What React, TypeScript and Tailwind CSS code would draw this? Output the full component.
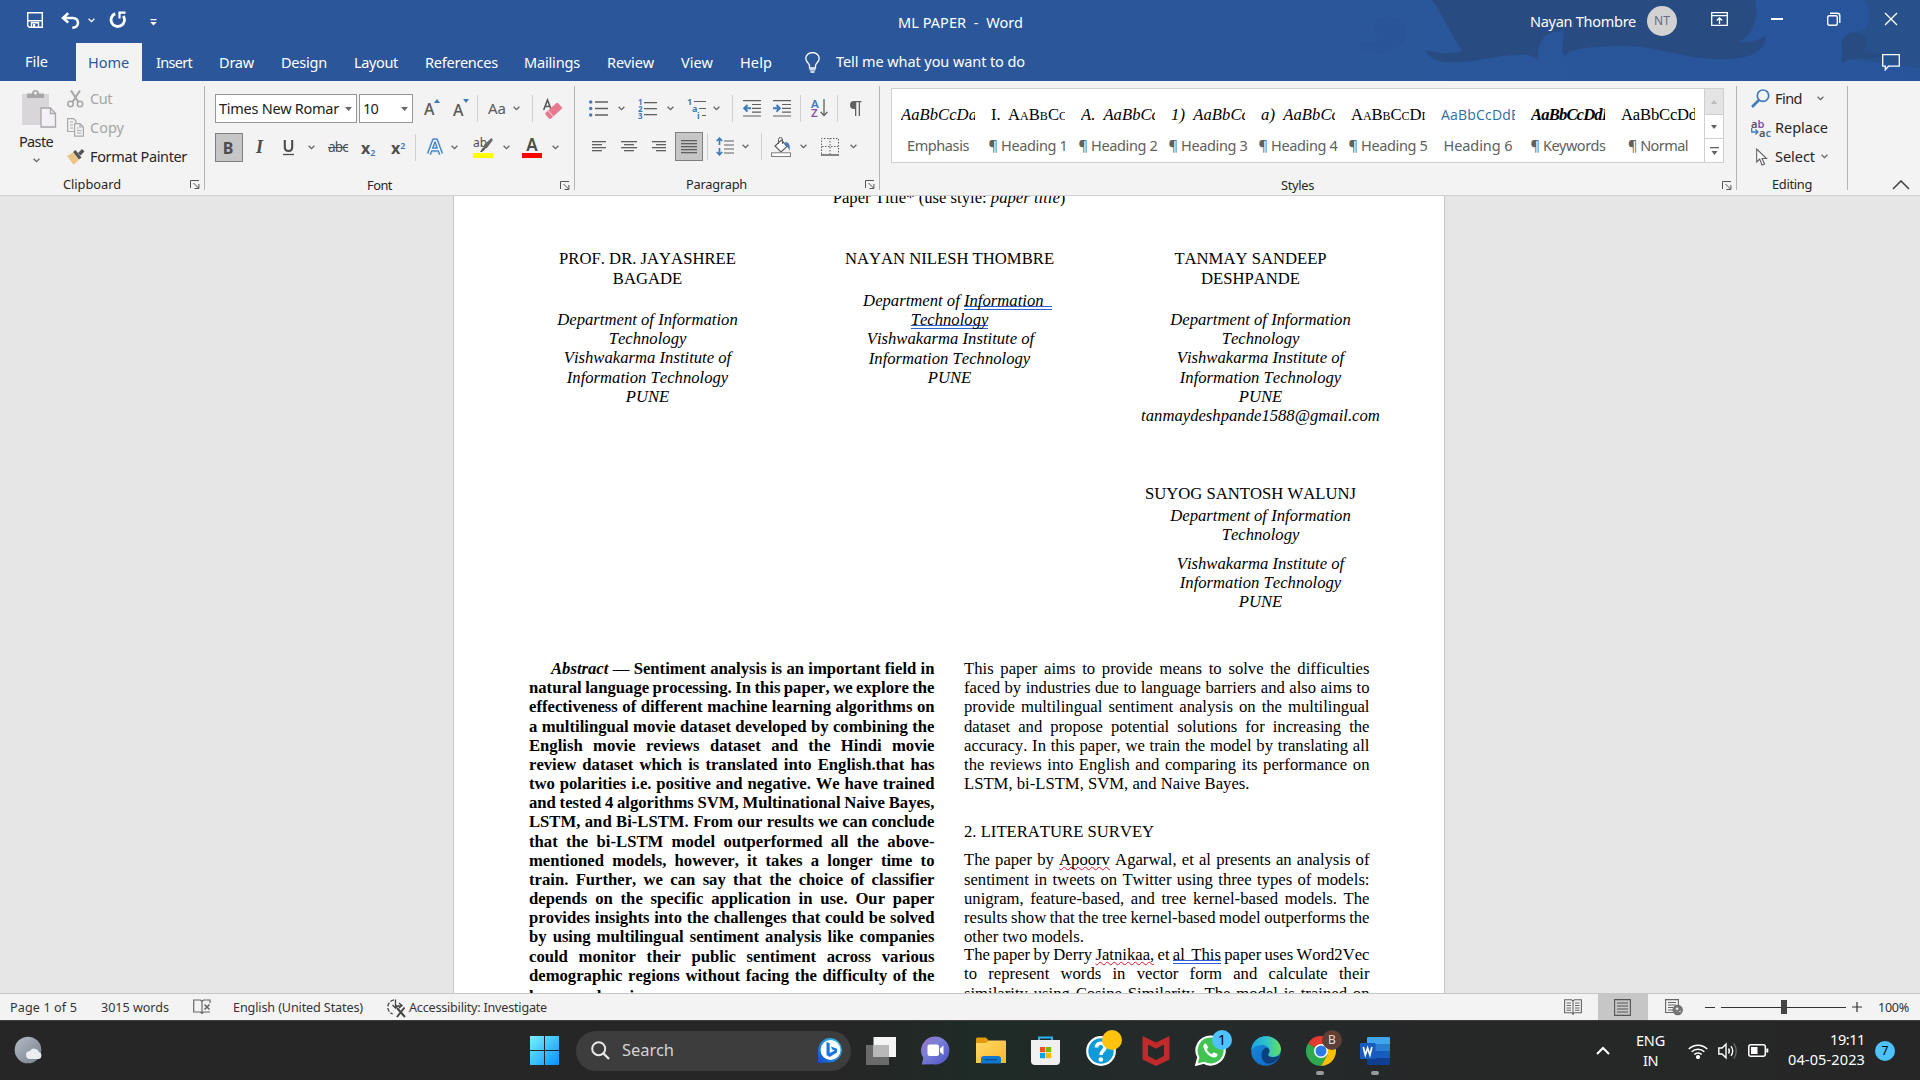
import { useLayoutEffect, useRef, useState } from "react";
import type { ReactNode } from "react";

/* Text tracked so that it spans exactly `w` pixels. */
function T({ w, children, className = "" }: { w: number; children: string; className?: string }) {
  const ref = useRef<HTMLSpanElement>(null);
  const [ls, setLs] = useState(0);
  useLayoutEffect(() => {
    const el = ref.current;
    if (!el) return;
    setLs((w - el.getBoundingClientRect().width) / children.length);
  }, [w, children]);
  return (
    <span ref={ref} className={`inline-block shrink-0 whitespace-pre ${className}`} style={{ letterSpacing: ls }}>
      {children}
    </span>
  );
}

function Caret({ className = "", c = "#666" }: { className?: string; c?: string }) {
  return (
    <svg className={`shrink-0 ${className}`} width="7" height="5" viewBox="0 0 7 5" fill="none" stroke={c} strokeWidth="1.3">
      <path d="M.6.8 3.5 3.7 6.4.8" />
    </svg>
  );
}

function Down() {
  return (
    <svg className="shrink-0" width="7" height="4" viewBox="0 0 7 4" fill="#666">
      <path d="M0 0h7L3.5 4z" />
    </svg>
  );
}

function Launcher({ className = "" }: { className?: string }) {
  return (
    <svg className={`shrink-0 ${className}`} width="10" height="9" viewBox="0 0 10 9" fill="none" stroke="#555" strokeWidth="1">
      <path d="M.5 8V.5H9M3.5 3l5 5M8.9 4v4.5H4.5" />
    </svg>
  );
}

function Slot({ children, className = "" }: { children?: ReactNode; className?: string }) {
  return <div className={`flex h-full shrink-0 items-center ${className}`}>{children}</div>;
}

const Sep = () => <div className="h-[27px] w-px shrink-0 bg-[#d0d0d0]" />;
const GroupSep = () => <div className="mt-[5px] h-[104px] w-px shrink-0 bg-[#b4b4b4]" />;

/* ---------- Title bar ---------- */

function TitleBar() {
  return (
    <div className="relative h-[81px] overflow-hidden bg-[#2b579a] text-white">
      <svg className="absolute top-0 right-0" width="640" height="81" viewBox="1280 0 640 81">
        <defs>
          <linearGradient id="sky" x1="0" x2="1"><stop offset="0" stopColor="#2b579a" /><stop offset="1" stopColor="#27549b" /></linearGradient>
        </defs>
        <path d="M1280 0h640v81h-640z" fill="url(#sky)" />
        <path d="M1380 18c14-3 24 2 24 12 6 5 2 13-12 19-14 5-30 2-34-4 8 0 16-2 22-6-8-6-8-16 0-21z" fill="#29508c" opacity=".35" />
        <path d="M1432 0h133v31c-22 0-28 12-27 29-8-6-14-6-20-5-25 0-45 9-73 7-11-2-18-6-19-12 8 3 27 5 36 1-9-13-18-34-30-51z" fill="#284c82" />
        <path d="M1564 0h191c4 18-2 35-16 42 12 1 21-2 26-7 3 17-18 26-51 24-38-2-58-14-96-13-26 1-46 1-54 11-4-12 2-16 0-57z" fill="#284c82" />
        <path d="M1864 0h56v68c-25-2-47-8-64-8-7-1-11 0-14 3-1-9 3-11 0-18 0-10 9-15 18-13 14-8 12-20 4-32z" fill="#28508b" />
        <path d="M1842 50c-2-11 5-18 14-17 11 1 14 11 7 17 4 2 14 2 20 6-20 5-34-1-41 7z" fill="#284c82" />
      </svg>
      <div className="relative flex h-[43px] items-start">
        <svg className="mt-[12px] ml-[27px]" width="16" height="16" viewBox="0 0 16 16" fill="none" stroke="#fff" strokeWidth="1.4">
          <path d="M.7.7h14.6v14.6H2.2L.7 13.8zM1 8.700h14" />
          <path d="M4.5 15v-4.3h7V15" /><path d="M6 12h2.200v3H6z" fill="#fff" stroke="none" />
        </svg>
        <svg className="mt-[12px] ml-[18px]" width="19" height="17" viewBox="0 0 19 17" fill="none" stroke="#fff" strokeWidth="2.5">
          <path d="M7.2 1.2 2 6l5.2 4.6M2 6h9.5q5.500.4 5.500 5-.2 4.500-5.700 4.700" />
        </svg>
        <Caret c="#fff" className="mt-[18px] ml-[8px]" />
        <svg className="mt-[11px] ml-[14px]" width="18" height="18" viewBox="0 0 18 18" fill="none" stroke="#fff" strokeWidth="2.800">
          <path d="M6.2 2.600A6.700 6.700 0 1 0 14.300 5" /><path d="M16.500 1.600h-6v6" strokeWidth="2.200" />
        </svg>
        <svg className="mt-[19px] ml-[23px]" width="7" height="7" viewBox="0 0 7 7" fill="#fff"><path d="M.5 0h6v1.200h-6zM.2 3h6.600L3.500 6.500z" /></svg>
        <T w={125} className="mt-[12px] ml-[741px] text-[14.5px] leading-[21px]">ML PAPER  -  Word</T>
        <T w={106} className="mt-[11px] ml-[507px] text-[14.5px] leading-[21px]">Nayan Thombre</T>
        <div className="mt-[6px] ml-[11px] flex h-[30px] w-[30px] items-center justify-center rounded-full bg-[#d2d2d2] text-[12px] text-[#6b6b78]">NT</div>
        <svg className="mt-[12px] ml-[34px]" width="17" height="15" viewBox="0 0 17 15" fill="none" stroke="#fff" strokeWidth="1.3"><path d="M.7.7h15.600v12.600H.7zM1 3.600h15M8.500 12V6M5.800 8.500l2.700-2.700 2.700 2.700" /></svg>
        <div className="mt-[18px] ml-[43px] h-[1.5px] w-[12px] bg-white" />
        <svg className="mt-[12px] ml-[44px]" width="14" height="15" viewBox="0 0 14 15" fill="none" stroke="#fff" strokeWidth="1.4"><rect x=".7" y="3.7" width="9.6" height="9.6" rx="1.5" /><path d="M3 1.200h7.200q2.600 0 2.600 2.600V11" /></svg>
        <svg className="mt-[12px] ml-[43px]" width="14" height="14" viewBox="0 0 14 14" stroke="#fff" strokeWidth="1.4"><path d="m1 1 12 12M13 1 1 13" /></svg>
      </div>
      <div className="relative flex h-[38px] items-center text-[14.5px]">
        <div className="flex w-[76px] pl-[25px]"><T w={23}>File</T></div>
        <div className="flex h-full w-[66px] items-center bg-[#f3f3f3] pt-px pl-[12px] text-[#2b579a]"><T w={41}>Home</T></div>
        <div className="flex w-[663px] pt-px pl-[14px]">
          <div className="w-[63px]"><T w={36}>Insert</T></div>
          <div className="w-[62px]"><T w={35}>Draw</T></div>
          <div className="w-[73px]"><T w={46}>Design</T></div>
          <div className="w-[71px]"><T w={44}>Layout</T></div>
          <div className="w-[99px]"><T w={73}>References</T></div>
          <div className="w-[83px]"><T w={56}>Mailings</T></div>
          <div className="w-[74px]"><T w={47}>Review</T></div>
          <div className="w-[59px]"><T w={32}>View</T></div>
          <T w={32}>Help</T>
        </div>
        <svg width="15" height="21" viewBox="0 0 15 21" fill="none" stroke="#fff" strokeWidth="1.3"><path d="M4.5 16v-2.5C4 11 .8 10 .8 6.6a6.7 6 0 0 1 13.4 0c0 3.4-3.200 4.400-3.700 6.900V16zM4.500 17.800h6M5.500 20h4" /></svg>
        <T w={189} className="ml-[16px]">Tell me what you want to do</T>
        <svg className="ml-[857px]" width="18" height="17" viewBox="0 0 18 17" fill="none" stroke="#fff" strokeWidth="1.3"><path d="M.7.7h16.600v11.500H6.500L3.300 15.800v-3.600H.7z" /></svg>
      </div>
    </div>
  );
}

/* ---------- Ribbon ---------- */

function Clipboard() {
  return (
    <div className="flex w-[204px] shrink-0 flex-col">
      <div className="flex h-[94px]">
        <div className="w-[67px]">
          <svg className="mt-[8px] ml-[21px]" width="36" height="40" viewBox="0 0 36 40"><path d="M1 5h27v31H1z" fill="#d9d6d9" /><path d="M6 9V4.500h5A3.500 3.500 0 0 1 18 4.500h5V9z" fill="#a9a6a9" /><circle cx="14.500" cy="4" r="1.500" fill="#f3f3f3" /><path d="M20 19h9.500l5 5.500V38H20z" fill="#f5f0f7" stroke="#a9a6a9" strokeWidth="1.300" /><path d="M29.500 19v5.500h5" fill="none" stroke="#a9a6a9" strokeWidth="1.300" /></svg>
          <T w={34} className="-mt-[3px] ml-[19px] block text-[14.5px] leading-[24px] text-[#262626]">Paste</T>
          <Caret className="mt-[5px] ml-[33px]" />
        </div>
        <div className="flex flex-col pt-[3px] text-[14.5px] leading-[29px]">
          <div className="flex h-[29px] items-center text-[#a6a6a6]">
            <svg className="mr-[6px]" width="17" height="18" viewBox="0 0 17 18" fill="none" stroke="#a6a6a6" strokeWidth="1.500"><path d="m4 .5 7.600 11.700M13 .5 5.400 12.200" strokeWidth="2" /><circle cx="3.500" cy="14" r="2.700" /><circle cx="13" cy="14" r="2.700" /></svg>
            <T w={22}>Cut</T>
          </div>
          <div className="flex h-[29px] items-center text-[#a6a6a6]">
            <svg className="mr-[6px]" width="17" height="19" viewBox="0 0 17 19" fill="none" stroke="#a9a9a9" strokeWidth="1.200"><path d="M7 13.500H.6V.6h6L9 3v2M3 4h3M3 7h3M3 10h3" /><path d="M7.600 5.600h5.500l3.300 3.300v9.200H7.600zM13 5.600V9h3.400M10 10h2M10 12.500h4.500M10 15h4.500" /></svg>
            <T w={34}>Copy</T>
          </div>
          <div className="flex h-[29px] items-center text-[#262626]">
            <svg className="mr-[5px]" width="18" height="16" viewBox="0 0 18 16"><path d="M0 7 6 3.500l6 7.500-5.500 4.700z" fill="#ecc485" /><path d="m6 3 2.500-2 6 7.500-2.500 2z" fill="#555" /><path d="m11 4 4-4 2.500 2.500-4 4z" fill="#555" /></svg>
            <T w={97}>Format Painter</T>
          </div>
        </div>
      </div>
      <div className="mt-px flex items-center text-[12.8px] leading-[21px] text-[#262626]">
        <T w={58} className="ml-[63px]">Clipboard</T><Launcher className="ml-[69px]" />
      </div>
    </div>
  );
}

function FontGroup() {
  return (
    <div className="flex w-[369px] shrink-0 flex-col">
      <div className="mt-[13px] flex h-[29px] items-center pl-[10px]">
        <div className="flex h-[29px] w-[142px] items-center border border-[#969696] bg-white pl-[3px]"><T w={120} className="text-[14.5px] text-[#222]">Times New Romar</T><span className="ml-[6px]"><Down /></span></div>
        <div className="ml-[2px] flex h-[29px] w-[54px] items-center border border-[#969696] bg-white pl-[3px]"><T w={15} className="text-[14.5px] text-[#222]">10</T><span className="ml-[23px]"><Down /></span></div>
        <Slot className="w-[29px] pl-[11px] text-[16px] text-[#595959]"><T w={11} className="font-medium">A</T><svg className="-mt-[15px] -ml-px" width="6" height="4" viewBox="0 0 6 4" fill="#3e7bba"><path d="M0 4 3 0l3 4z" /></svg></Slot>
        <Slot className="w-[35px] pl-[11px] text-[16px] text-[#595959]"><T w={11} className="pt-[2px] font-medium">A</T><svg className="-mt-[15px] -ml-px" width="6" height="4" viewBox="0 0 6 4" fill="#3e7bba"><path d="m0 0 3 4 3-4z" /></svg></Slot>
        <Sep />
        <Slot className="w-[54px] pl-[10px] text-[15px] text-[#595959]"><T w={18}>Aa</T><Caret className="ml-[7px]" /></Slot>
        <Sep />
        <svg className="ml-[10px]" width="20" height="21" viewBox="0 0 20 21"><path d="M.7 12 4.500 2l3.800 10M2 8.500h5" fill="none" stroke="#595959" strokeWidth="1.600" /><g transform="rotate(-42 11 12.500)"><rect x="2" y="8.500" width="17" height="8" rx="1.500" fill="#e8798e" /><path d="M6.500 8.500v8" stroke="#f6d5db" /></g></svg>
      </div>
      <div className="mt-[10px] flex h-[29px] items-center pl-[10px] text-[#4d4d4d]">
        <div className="flex h-[29px] w-[28px] items-center justify-center border border-[#7f7f7f] bg-[#c6c6c6] pr-[2px] text-[16px] font-bold">B</div>
        <Slot className="w-[40px] justify-center pr-[7px]"><span className="font-['Liberation_Serif'] text-[18px] font-bold italic">I</span></Slot>
        <svg width="11" height="18" viewBox="0 0 11 18" fill="none" stroke="#4d4d4d"><path d="M1.800 1v7q0 4 3.700 4t3.700-4V1" strokeWidth="2.100" /><path d="M0 15.500h11" strokeWidth="1.300" /></svg>
        <Caret className="ml-[14px]" />
        <T w={20} className="ml-[13px] text-[13.5px] line-through">abc</T>
        <span className="ml-[13px] w-[30px] text-[16px] font-bold">x<sub className="text-[9px] font-semibold text-[#3e7bba]">2</sub></span>
        <span className="w-[24px] text-[16px] font-bold">x<sup className="text-[9px] font-semibold text-[#3e7bba]">2</sup></span>
        <Sep />
        <svg className="ml-[10px]" width="18" height="19" viewBox="0 0 18 19" strokeLinejoin="round"><path d="M3 16 8 2.500h2L15 16M5 11.500h8" fill="none" stroke="#b6d2ef" strokeWidth="5.400" /><path d="M3 16 8 2.500h2L15 16M5 11.500h8" fill="none" stroke="#3a7cc2" strokeWidth="3.800" /><path d="M3 16 8 2.500h2L15 16M5 11.500h8" fill="none" stroke="#fff" strokeWidth="1.500" /></svg>
        <Caret className="ml-[7px]" />
        <div className="ml-[15px] flex w-[20px] flex-col">
          <div className="flex h-[15px]"><span className="text-[12px] leading-[9px]">ab</span><svg className="-ml-[7px]" width="13" height="15" viewBox="0 0 13 15"><path d="M11.500 0 13 2 7 10 3.500 11.500 4 7z" fill="#666" /><path d="m3 9.500 2 2L2 14H0z" fill="#555" /></svg></div>
          <div className="h-[5px] w-[20px] bg-[#ffff00]" />
        </div>
        <Caret className="ml-[10px]" />
        <div className="ml-[12px] flex w-[20px] flex-col items-center"><span className="h-[15px] text-[17px] leading-[14px] font-semibold">A</span><div className="h-[5px] w-[20px] bg-[#ff0000]" /></div>
        <Caret className="ml-[10px]" />
      </div>
      <div className="mt-[13px] flex items-center text-[12.8px] leading-[21px] text-[#262626]">
        <T w={25} className="ml-[162px]">Font</T><Launcher className="ml-[168px]" />
      </div>
    </div>
  );
}

function Lines({ rows, w = 18, h = 17 }: { rows: [number, number, number][]; w?: number; h?: number }) {
  return (
    <svg className="shrink-0" width={w} height={h} viewBox={`0 0 ${w} ${h}`} fill="#606060">
      {rows.map(([x, y, l]) => <rect key={y} x={x} y={y} width={l} height="1.3" />)}
    </svg>
  );
}

function Paragraph() {
  return (
    <div className="flex w-[304px] shrink-0 flex-col">
      <div className="mt-[13px] flex h-[29px] items-center">
        <svg className="ml-[14px]" width="19" height="19" viewBox="0 0 19 19"><path d="M6 3h13M6 9.500h13M6 16h13" stroke="#606060" strokeWidth="1.300" /><g fill="#3e7bba"><circle cx="1.700" cy="3" r="1.700" /><circle cx="1.700" cy="9.500" r="1.700" /><circle cx="1.700" cy="16" r="1.700" /></g></svg>
        <Caret className="ml-[10px]" />
        <div className="ml-[13px] flex h-[20px] w-[19px] items-center">
          <div className="flex w-[6px] flex-col text-[8px] leading-[7px] font-bold text-[#3e7bba]"><span>1</span><span>2</span><span>3</span></div>
          <Lines w={13} h={19} rows={[[0, 3, 13], [0, 9, 13], [0, 15, 13]]} />
        </div>
        <Caret className="ml-[10px]" />
        <div className="ml-[13px] flex h-[20px] w-[19px] flex-col text-[9px] leading-[7px] font-bold text-[#3e7bba]">
          <div className="flex items-center gap-[2px]">1<div className="h-px w-[12px] bg-[#606060]" /></div>
          <div className="flex items-center gap-[2px] pl-[5px]">a<div className="h-px w-[7px] bg-[#606060]" /></div>
          <div className="flex items-center gap-[2px] pl-[10px]">i<div className="h-px w-[5px] bg-[#606060]" /></div>
        </div>
        <Caret className="ml-[7px]" />
        <Slot className="ml-[12px]"><Sep /></Slot>
        <svg className="ml-[10px]" width="18" height="17" viewBox="0 0 18 17"><path d="M0 .7h18M9 4.500h9M9 8.300h9M9 12.200h9M0 16h18" stroke="#606060" strokeWidth="1.200" /><path d="M8 8.300H1.500M4.500 5 1.200 8.300l3.300 3.300" fill="none" stroke="#3e7bba" strokeWidth="2" /></svg>
        <svg className="ml-[12px]" width="18" height="17" viewBox="0 0 18 17"><path d="M0 .7h18M9 4.500h9M9 8.300h9M9 12.200h9M0 16h18" stroke="#606060" strokeWidth="1.200" /><path d="M0 8.300h6.500M3.500 5l3.300 3.300-3.300 3.300" fill="none" stroke="#3e7bba" strokeWidth="2" /></svg>
        <Slot className="ml-[9px]"><Sep /></Slot>
        <div className="ml-[10px] flex w-[18px] items-center">
          <div className="flex flex-col text-[11.5px] leading-[9.5px] font-semibold"><span className="text-[#3e7bba]">A</span><span className="text-[#8a50a8]">Z</span></div>
          <svg className="ml-px" width="8" height="18" viewBox="0 0 8 18" fill="none" stroke="#606060" strokeWidth="1.300"><path d="M4 0v16.500M.7 13 4 16.600 7.300 13" /></svg>
        </div>
        <Slot className="ml-[8px]"><Sep /></Slot>
        <svg className="ml-[11px]" width="13" height="15" viewBox="0 0 13 15" fill="#606060"><path d="M5 0h7.500v1.300H11V15H9.700V1.300H7.300V15H6V8H5A4 4 0 0 1 5 0z" /></svg>
      </div>
      <div className="mt-[10px] flex h-[29px] items-center">
        <div className="w-[29px] pl-[17px]"><Lines w={15} h={12} rows={[[0, 0, 14], [0, 3, 10], [0, 6, 14], [0, 9, 10]]} /></div>
        <div className="ml-[17px]"><Lines w={16} h={12} rows={[[0, 0, 16], [3, 3, 10], [0, 6, 16], [3, 9, 10]]} /></div>
        <div className="ml-[15px]"><Lines w={15} h={12} rows={[[0, 0, 14], [4, 3, 10], [0, 6, 14], [4, 9, 10]]} /></div>
        <div className="ml-[8px] flex h-[29px] w-[28px] items-center justify-center border border-[#7f7f7f] bg-[#c6c6c6]"><Lines w={16} h={14} rows={[[0, 0, 16], [0, 3, 16], [0, 6, 16], [0, 9, 16], [0, 12, 16]]} /></div>
        <Slot className="ml-[4px]"><Sep /></Slot>
        <svg className="ml-[8px]" width="18" height="19" viewBox="0 0 18 19"><path d="M8 4h10M8 8h10M8 12h10M8 16h10" stroke="#606060" strokeWidth="1.200" /><path d="M3.500 1.500V8M.8 4 3.500 1.200 6.200 4M3.500 11v6.500M.8 15l2.700 2.800L6.200 15" fill="none" stroke="#3e7bba" strokeWidth="1.700" /></svg>
        <Caret className="ml-[8px]" />
        <Slot className="ml-[12px]"><Sep /></Slot>
        <svg className="ml-[9px]" width="20" height="20" viewBox="0 0 20 20"><path d="m4 9 6.500-6 5.500 6.500-6 5.500z" fill="#fff" stroke="#606060" strokeWidth="1.200" /><path d="M7.500 7V2.500a2 2 0 0 1 4 0V7" fill="none" stroke="#606060" /><path d="M14 5c4 0 5.500 3 4.500 9q-1-4-3.500-5z" fill="#3e7bba" /><rect x=".5" y="15.800" width="19" height="3.700" fill="#fff" stroke="#808080" /></svg>
        <Caret className="ml-[9px]" />
        <svg className="ml-[14px]" width="18" height="18" viewBox="0 0 18 18" fill="none" stroke="#606060"><path d="M.5 16V.5h17V16M9 0v16M1 8.500h16" strokeDasharray="1.500 1.500" /><path d="M0 17h18" strokeWidth="1.500" /></svg>
        <Caret className="ml-[11px]" />
      </div>
      <div className="mt-[13px] flex items-center text-[12.8px] leading-[21px] text-[#262626]">
        <T w={61} className="ml-[111px]">Paragraph</T><Launcher className="ml-[118px]" />
      </div>
    </div>
  );
}

const STYLES: { s: string; sw: number; n: string; nw: number; c: string }[] = [
  { s: "AaBbCcDa", sw: 76, n: "Emphasis", nw: 62, c: "italic text-black" },
  { s: "I.  AaBbCc", sw: 76, n: "¶ Heading 1", nw: 79, c: "[font-variant:small-caps] text-black" },
  { s: "A.  AaBbCc", sw: 78, n: "¶ Heading 2", nw: 79, c: "italic text-black" },
  { s: "1)  AaBbCc", sw: 78, n: "¶ Heading 3", nw: 79, c: "italic text-black" },
  { s: "a)  AaBbCc", sw: 78, n: "¶ Heading 4", nw: 79, c: "italic text-black" },
  { s: "AaBbCcDd", sw: 79, n: "¶ Heading 5", nw: 79, c: "[font-variant:small-caps] text-black" },
  { s: "AaBbCcDdE", sw: 78, n: "Heading 6", nw: 69, c: "font-['Open_Sans'] text-[14px] text-[#2e6da6]" },
  { s: "AaBbCcDdE", sw: 81, n: "¶ Keywords", nw: 75, c: "font-bold italic text-black" },
  { s: "AaBbCcDd", sw: 76, n: "¶ Normal", nw: 60, c: "text-black" },
];

function Styles() {
  return (
    <div className="flex w-[856px] shrink-0 flex-col">
      <div className="mt-[7px] ml-[11px] flex h-[75px] w-[833px] border border-[#cfcfcf] bg-white">
        <div className="flex w-[812px] pl-px">
          {STYLES.map((x) => (
            <div key={x.n} className="flex w-[90px] shrink-0 flex-col items-center">
              <div className="mt-[14px] h-[24px] w-[74px] overflow-hidden font-['Liberation_Serif'] text-[16.6px] leading-[24px]"><T w={x.sw} className={x.c}>{x.s}</T></div>
              <T w={x.nw} className="mt-[6px] text-[14.5px] leading-[24px] text-[#606060]">{x.n}</T>
            </div>
          ))}
        </div>
        <div className="flex w-[19px] flex-col border-l border-[#cfcfcf]">
          <div className="flex h-[26px] items-center justify-center border-b border-[#cfcfcf] bg-[#e4e4e4]"><svg width="6" height="4" fill="#bbb"><path d="M0 4 3 0l3 4z" /></svg></div>
          <div className="flex h-[24px] items-center justify-center border-b border-[#cfcfcf]"><svg width="6" height="4" fill="#606060"><path d="m0 0 3 4 3-4z" /></svg></div>
          <div className="flex h-[23px] items-center justify-center"><svg width="9" height="8" fill="#606060"><path d="M0 0h9v1.300H0zM1.500 4h6l-3 4z" /></svg></div>
        </div>
      </div>
      <div className="mt-[12px] flex items-center text-[12.8px] leading-[21px] text-[#262626]">
        <T w={33} className="ml-[401px]">Styles</T><Launcher className="ml-[408px]" />
      </div>
    </div>
  );
}

function Editing() {
  return (
    <div className="flex w-[110px] shrink-0 flex-col">
      <div className="flex h-[94px] flex-col pt-[3px] pl-[14px] text-[14.5px] text-[#262626]">
        <div className="flex h-[29px] items-center"><svg className="mr-[5px]" width="19" height="19" viewBox="0 0 19 19" fill="none" stroke="#3e7bba"><circle cx="12" cy="6.700" r="5.700" strokeWidth="1.700" /><path d="M8 11 1 18" strokeWidth="2.600" /></svg><T w={27}>Find</T><Caret className="ml-[15px]" /></div>
        <div className="flex h-[29px] items-center">
          <div className="mr-[4px] flex w-[20px] flex-col text-[11px] leading-[9px] font-semibold text-[#555]">
            <span>a<span className="text-[#8a50a8]">b</span></span>
            <div className="flex"><svg width="8" height="9" viewBox="0 0 8 9" fill="none" stroke="#3e7bba" strokeWidth="1.300"><path d="M.7 0v4H7M4.500 1.500 7 4 4.500 6.500" /></svg>a<span className="text-[#3e7bba]">c</span></div>
          </div>
          <T w={53}>Replace</T>
        </div>
        <div className="flex h-[29px] items-center"><svg className="mr-[7px] ml-[5px]" width="12" height="18" viewBox="0 0 12 18" fill="#fff" stroke="#606060" strokeWidth="1.100"><path d="M.7 1v13l3-3 2.300 6 2.500-1-2.500-5.500h4.500z" /></svg><T w={40}>Select</T><Caret className="ml-[6px]" /></div>
      </div>
      <div className="mt-px flex items-center text-[12.8px] leading-[21px] text-[#262626]"><T w={40} className="ml-[35px]">Editing</T></div>
    </div>
  );
}

/* ---------- Document ---------- */

const Blue = ({ children }: { children: string }) => (
  <span className="bg-[linear-gradient(#2a62d8_1px,transparent_1px,transparent_3px,#2a62d8_3px)] bg-[length:100%_4px] bg-bottom bg-no-repeat">{children}</span>
);
const Red = ({ children }: { children: string }) => (
  <span className="underline decoration-[#e81123] decoration-wavy decoration-1 underline-offset-[1px] [text-decoration-skip-ink:none]">{children}</span>
);

const TIGHT = "[word-spacing:-1px]";

const ABSTRACT: [string, string?][] = [
  ["natural language processing. In this paper, we explore the", TIGHT],
  ["effectiveness of different machine learning algorithms on"],
  ["a multilingual movie dataset developed by combining the"],
  ["English movie reviews dataset and the Hindi movie"],
  ["review dataset which is translated into English.that has"],
  ["two polarities i.e. positive and negative. We have trained"],
  ["and tested 4 algorithms SVM, Multinational Naive Bayes,", TIGHT],
  ["LSTM, and Bi-LSTM. From our results we can conclude"],
  ["that the bi-LSTM model outperformed all the above-"],
  ["mentioned models, however, it takes a longer time to"],
  ["train. Further, we can say that the choice of classifier"],
  ["depends on the specific application in use. Our paper"],
  ["provides insights into the challenges that could be solved"],
  ["by using multilingual sentiment analysis like companies"],
  ["could monitor their public sentiment across various"],
  ["demographic regions without facing the difficulty of the"],
];

const INTRO = [
  "This paper aims to provide means to solve the difficulties",
  "faced by industries due to language barriers and also aims to",
  "provide multilingual sentiment analysis on the multilingual",
  "dataset and propose potential solutions for increasing the",
  "accuracy. In this paper, we train the model by translating all",
  "the reviews into English and comparing its performance on",
];

function J({ children, className = "" }: { children: ReactNode; className?: string }) {
  return <div className={`w-[405.5px] [text-align-last:justify] whitespace-nowrap ${className}`}>{children}</div>;
}

function Page() {
  return (
    <div className="ml-[453px] h-[797px] w-[992px] overflow-hidden border-x border-[#c6c6c6] bg-white font-['Liberation_Serif'] text-[16.67px] leading-[19.17px] text-black [font-kerning:none] [font-variant-ligatures:none]">
      <div className="-mt-[8px] h-[61px] text-center">Paper Title* (use style: <i>paper title</i>)</div>
      <div className="flex h-[410px] text-center">
        <div className="w-[387px]">
          <div className="leading-[20px]">PROF. DR. JAYASHREE<br />BAGADE</div>
          <div className="mt-[21px] italic">Department of Information<br />Technology<br />Vishwakarma Institute of<br />Information Technology<br />PUNE</div>
        </div>
        <div className="w-[217px]">
          <div className="leading-[20px]">NAYAN NILESH THOMBRE</div>
          <div className="mt-[22px] italic">
            <div className="pl-[16px] whitespace-pre">Department of <Blue>{"Information  "}</Blue></div>
            <Blue>Technology</Blue><br /><span className="pl-[2px]">Vishwakarma Institute of</span><br />Information Technology<br />PUNE
          </div>
        </div>
        <div className="w-[385px]">
          <div className="leading-[20px]">TANMAY SANDEEP<br />DESHPANDE</div>
          <div className="mt-[21px] pl-[20px] italic">Department of Information<br />Technology<br />Vishwakarma Institute of<br />Information Technology<br />PUNE<br />tanmaydeshpande1588@gmail.com</div>
          <div className="mt-[59px]">SUYOG SANTOSH WALUNJ</div>
          <div className="mt-[3px] pl-[20px] italic">Department of Information<br />Technology</div>
          <div className="mt-[9px] pl-[20px] italic">Vishwakarma Institute of<br />Information Technology<br />PUNE</div>
        </div>
      </div>
      <div className="flex gap-[29.5px] pl-[75px]">
        <div className="font-bold">
          <J className="pl-[22px]"><i>Abstract</i> <span className="font-normal">—</span> Sentiment analysis is an important field in</J>
          {ABSTRACT.map(([l, c]) => <J key={l} className={c}>{l}</J>)}
          <div className="pt-[2px]">language barrier.</div>
        </div>
        <div>
          {INTRO.map((l) => <J key={l}>{l}</J>)}
          <div>LSTM, bi-LSTM, SVM, and Naive Bayes.</div>
          <div className="mt-[29px]">2. LITERATURE SURVEY</div>
          <J className="mt-[9px]">The paper by <Red>Apoorv</Red> Agarwal, et al presents an analysis of</J>
          <J>sentiment in tweets on Twitter using three types of models:</J>
          <J>unigram, feature-based, and tree kernel-based models. The</J>
          <J className="[word-spacing:-1px]">results show that the tree kernel-based model outperforms the</J>
          <div>other two models.</div>
          <J className="-mt-px [word-spacing:-1px]">The paper by Derry <Red>Jatnikaa,</Red> et <Blue>{"al\u00a0\u00a0This"}</Blue> paper uses Word2Vec</J>
          <J>to represent words in vector form and calculate their</J>
          <J>similarity using Cosine Similarity. The model is trained on</J>
        </div>
      </div>
    </div>
  );
}

/* ---------- Status bar ---------- */

function StatusBar() {
  return (
    <div className="flex h-[27px] items-center border-t border-[#c6c6c6] bg-[#f3f3f3] text-[12.6px] text-[#333]">
      <div className="flex w-[91px] shrink-0 pt-[2px]"><T w={67} className="ml-[10px]">Page 1 of 5</T></div>
      <div className="flex w-[92px] shrink-0 pt-[2px]"><T w={68} className="ml-[10px]">3015 words</T></div>
      <svg className="ml-[10px]" width="18" height="16" viewBox="0 0 18 16" fill="none" stroke="#666" strokeWidth="1.200"><path d="M9 2.500V15M17 4V1H10.500L9 2.500 7.500 1H.7v12h6.800L9 14.500l1.500-1.500H17" /><path d="m11.500 5.500 5 5M16.500 5.500l-5 5" strokeWidth="1.600" /></svg>
      <T w={130} className="ml-[22px] pt-[2px]">English (United States)</T>
      <svg className="mt-[3px] ml-[24px]" width="20" height="19" viewBox="0 0 20 19" fill="none" stroke="#444" strokeWidth="1.300"><path d="M7 .8A7.500 7.500 0 0 0 .8 8c0 3.500 2 6 5 7" strokeDasharray="4 1.500" /><path d="M8.500.5v8M5.500 6l3 3 2-2M12 4l3 2.500L12 9M8 7h7" /><path d="m10 9 8 9M17.500 8.500 10 18" strokeWidth="2" /></svg>
      <T w={138} className="ml-[2px] pt-[2px]">Accessibility: Investigate</T>
      <svg className="ml-[1017px]" width="18" height="17" viewBox="0 0 18 17" fill="none" stroke="#666"><path d="M9 2v14M9 2 7.500.8H.6v12.900h6.900L9 15l1.500-1.300h6.900V.8h-6.900zM2.500 4h4.500M2.500 6.500h4.500M2.500 9h4.500M2.500 11.300h4.500M11 4h4.500M11 6.500h4.500M11 9h4.500M11 11.300h4.500" strokeWidth="1.100" /></svg>
      <div className="ml-[16px] flex h-[26px] w-[50px] items-center justify-center bg-[#c6c6c6] pr-px"><svg width="17" height="17" viewBox="0 0 17 17" fill="none" stroke="#555" strokeWidth="1.100"><path d="M.6.6h15.800v15.800H.6zM3 4h11M3 7h11M3 10h11M3 13h11" /></svg></div>
      <svg className="ml-[17px]" width="18" height="17" viewBox="0 0 18 17" fill="none" stroke="#666" strokeWidth="1.100"><path d="M8 13.500H.6V.6h12.800V6M3 3.500h8M3 6h8M3 8.500h5M3 11h5" /><circle cx="12.700" cy="11" r="4.600" fill="#777" stroke="#666" /><path d="m10.500 9 2-.5 1 1.500-1.500 1.500zM14 12.500l1.500-1v2z" fill="#f3f3f3" stroke="none" /></svg>
      <div className="ml-[22px] h-px w-[10px] bg-[#333]" />
      <div className="ml-[6px] flex h-[14px] w-[125px] items-center">
        <div className="h-px w-[60px] bg-[#333]" /><div className="h-[14px] w-[6px] bg-[#444]" /><div className="h-px w-[59px] bg-[#333]" />
      </div>
      <svg className="ml-[6px]" width="10" height="10" viewBox="0 0 10 10" stroke="#333" strokeWidth="1.200"><path d="M0 5h10M5 0v10" /></svg>
      <T w={31} className="ml-[16px] pt-[2px]">100%</T>
    </div>
  );
}

/* ---------- Taskbar ---------- */

function Task({ children, run }: { children: ReactNode; run?: boolean }) {
  return (
    <div className="relative flex h-[60px] w-[55px] shrink-0 items-center justify-center">
      {children}
      {run && <div className="absolute top-[50px] left-[23px] h-[4px] w-[8px] rounded-full bg-[#9a9a9a]" />}
    </div>
  );
}

function Badge({ children, className }: { children?: string; className: string }) {
  return <div className={`absolute top-[9px] left-[29px] flex h-[20px] w-[20px] items-center justify-center rounded-full text-[12px] ${className}`}>{children}</div>;
}

function Taskbar() {
  return (
    <div className="flex h-[60px] items-center border-t border-[#3c3c3c] bg-[linear-gradient(90deg,#262626_0%,#262626_44%,#1e2b27_51%,#242a2a_60%,#262828_75%,#262626_100%)] text-white">
      <svg className="ml-[14px]" width="30" height="30" viewBox="0 0 30 30"><defs><linearGradient id="wm" y2="1"><stop stopColor="#b4bcc6" /><stop offset="1" stopColor="#77808a" /></linearGradient></defs><circle cx="14" cy="14" r="13.300" fill="url(#wm)" /><path d="M16 23a4 4 0 0 1 0-8 5 5 0 0 1 9 1 3.700 3.700 0 0 1 0 7z" fill="#e9edf2" /></svg>
      <svg className="ml-[486px]" width="29" height="29" viewBox="0 0 29 29"><defs><linearGradient id="win" x2="1" y2="1"><stop stopColor="#7af0ff" /><stop offset="1" stopColor="#0591ff" /></linearGradient></defs><path d="M0 0h14v14H0zM15 0h14v14H15zM0 15h14v14H0zM15 15h14v14H15z" fill="url(#win)" /></svg>
      <div className="ml-[17px] flex h-[40px] w-[275px] items-center rounded-full bg-[#3d3d3d] pl-[15px]">
        <svg width="19" height="19" viewBox="0 0 19 19" fill="none" stroke="#e8e8e8" strokeWidth="2"><circle cx="7.700" cy="7.700" r="6.500" /><path d="m12.500 12.500 5.500 5.500" strokeWidth="2.400" /></svg>
        <T w={52} className="ml-[12px] text-[16.5px] text-[#d4d4d4]">Search</T>
        <svg className="ml-[143px]" width="27" height="27" viewBox="0 0 27 27"><defs><linearGradient id="bg1" x1="1" x2="0" y2="1"><stop stopColor="#35d0f5" /><stop offset="1" stopColor="#1549c4" /></linearGradient></defs><path d="M13.500 1a12 12 0 1 1-2 24.500L1 26V13A12.500 12.500 0 0 1 13.500 1z" fill="url(#bg1)" /><circle cx="13.500" cy="13" r="10" fill="#fff" /><path d="m9.500 5 3.200 1.300V16l5-2.500-2.500-1-1.200-3 6 2.200v3.800L12.700 20l-3.200-2z" fill="#1b77e0" /></svg>
      </div>
      <div className="ml-[2px] flex">
        <Task><svg width="30" height="28" viewBox="0 0 30 28"><path d="M0 8h23v20H0z" fill="#6a6a6a" /><path d="M7.500 0H30v20H7.500z" fill="#f5f5f5" /><path d="M7.500 8H23v12H7.500z" fill="#b9b9b9" /></svg></Task>
        <Task><svg width="29" height="29" viewBox="0 0 29 29"><defs><linearGradient id="ch" x2="1" y2="1"><stop stopColor="#9b6fc4" /><stop offset=".4" stopColor="#7a80d8" /><stop offset="1" stopColor="#4a52c4" /></linearGradient></defs><path d="M14.500.5a14 14 0 1 1-3 27.700L.8 28.500 2.300 22A14 14 0 0 1 14.500.5z" fill="url(#ch)" /><rect x="6.500" y="8.500" width="11.500" height="11.500" rx="2" fill="#fff" /><path d="m19 12.500 3.500-3v9.500L19 16z" fill="#fff" /></svg></Task>
        <Task><svg width="30" height="27" viewBox="0 0 30 27"><defs><linearGradient id="fo" y2="1"><stop stopColor="#ffd965" /><stop offset="1" stopColor="#f7b92c" /></linearGradient></defs><path d="M0 2q0-1.500 1.500-1.500H10L13 4v4H0z" fill="#e09c0c" /><path d="M0 6h10l3-2.500h16q1 0 1 1V26H0z" fill="url(#fo)" /><path d="M5 26.500V22q0-3 3-3h14q3 0 3 3v4.500z" fill="#1078cf" /><path d="M9 22.700h12" stroke="#0a4d92" strokeWidth="1.300" /></svg></Task>
        <Task><svg width="29" height="29" viewBox="0 0 29 29"><path d="M8 6V1.500h13V6" fill="none" stroke="#29b6f0" strokeWidth="2" /><path d="M0 4h29v21q0 4-4 4H4q-4 0-4-4z" fill="#f0f0f0" /><path d="M9 11h5.200v5.200H9z" fill="#f05022" /><path d="M15 11h5.200v5.200H15z" fill="#7eb900" /><path d="M9 17h5.200v5.200H9z" fill="#00a3ee" /><path d="M15 17h5.200v5.200H15z" fill="#fdb800" /></svg></Task>
        <Task><svg width="30" height="30" viewBox="0 0 30 30"><circle cx="15" cy="15" r="13.800" fill="#0f9bd8" stroke="#fff" strokeWidth="2.200" /><path d="M10.500 11.500c0-6 9-5.500 8.500 0-.3 3.500-4 3.300-4 7.500" fill="none" stroke="#fff" strokeWidth="3.600" /><circle cx="14.800" cy="23.500" r="2.300" fill="#fff" /></svg><Badge className="bg-[#ffc20e]" /></Task>
        <Task><svg width="28" height="30" viewBox="0 0 28 30"><path d="m.5 0 13.500 6.500L27.500 0v23.500L14 30 .5 23.500zM6 8.500V20l8 4 8-4V8.500l-8 4.200z" fill="#c02a2a" fillRule="evenodd" /></svg></Task>
        <Task><svg width="31" height="31" viewBox="0 0 31 31"><path d="M15.500 1.500a14 14 0 1 1-6.500 26.300L1.300 29.700l2-7.400A14 14 0 0 1 15.500 1.500z" fill="#3fc351" stroke="#fff" strokeWidth="2.200" /><path d="M11 8.500c-2 0-3 2-2.500 4 1.500 5 5.500 9 10 10 2.500.3 4.500-1.500 4-3.500l-3.700-1.800-2 2c-2.500-1-4.200-3-5-5l1.500-1.800z" fill="#fff" /></svg><Badge className="bg-[#4cc2ff] text-[14px] text-black">1</Badge></Task>
        <Task><svg width="30" height="30" viewBox="0 0 30 30"><defs><linearGradient id="e1" x2="1"><stop stopColor="#1ca6e8" /><stop offset=".55" stopColor="#31c5c4" /><stop offset="1" stopColor="#66e05a" /></linearGradient><linearGradient id="e2" y2="1"><stop stopColor="#1a8fe0" /><stop offset="1" stopColor="#0b62be" /></linearGradient></defs><circle cx="15" cy="15" r="14.800" fill="url(#e2)" /><path d="M.3 14C1 6 7 .2 15 .2 24 .2 30 7 30 13c0 5-4 8-8 8-3 0-5-1.200-5-2.500 0-1 1.500-1.500 1.500-4C18.500 11.500 15 9 11 9 5.500 9 1 12 .3 14z" fill="url(#e1)" /><path d="M10.500 19c0-4 2-6.500 5-7.500 2.300.7 3 2.200 3 3.500 0 2-1.500 2.500-1.500 3.700C17 20 19 21.200 22 21.200c2.700 0 4.700-.7 6-1.700.6.200.7.900.2 1.500C25 26 20 28 16 27.500c-3.500-1-5.500-4.500-5.500-8.500z" fill="#0d3f7c" /></svg></Task>
        <Task run><svg width="30" height="30" viewBox="0 0 30 30"><path d="M15 15 2 7.500A15 15 0 0 1 28 7.500z" fill="#e33b2e" /><path d="M15 15 2 7.500A15 15 0 0 0 15 30l6.500-11.300z" fill="#2da94f" /><path d="M15 8h13.300A15 15 0 0 1 15 30l6.500-11.500z" fill="#fdbd00" /><circle cx="15" cy="15" r="7" fill="#fff" /><circle cx="15" cy="15" r="5.500" fill="#2a7be8" /></svg><Badge className="bg-[#5d4037] text-[#ddd]">B</Badge></Task>
        <Task run><svg className="mr-px" width="30" height="28" viewBox="0 0 30 28"><path d="M7 1q0-1 1-1h21q1 0 1 1v6.500H7z" fill="#41a5ee" /><path d="M7 7h23v7H7z" fill="#2b7cd3" /><path d="M7 14h23v7H7z" fill="#185abd" /><path d="M7 21h23v6q0 1-1 1H8q-1 0-1-1z" fill="#103f91" /><rect y="6" width="15.500" height="16" rx="1" fill="#185abd" /><path d="m3.300 10 2 8 2.300-7 2.300 7 2-8" fill="none" stroke="#fff" strokeWidth="1.700" /></svg></Task>
      </div>
      <svg className="ml-[193px]" width="14" height="9" viewBox="0 0 14 9" fill="none" stroke="#fff" strokeWidth="2"><path d="m1 8 6-6 6 6" /></svg>
      <div className="ml-[26px] flex w-[29px] flex-col items-center pb-[2px] text-[14.5px] leading-[20px]"><T w={29}>ENG</T><T w={15}>IN</T></div>
      <svg className="ml-[23px]" width="20" height="16" viewBox="0 0 20 16" fill="none" stroke="#fff" strokeWidth="1.600"><path d="M.8 6a13 13 0 0 1 18.400 0M3.700 8.800a9 9 0 0 1 12.600 0M6.300 11.500a5.500 5.500 0 0 1 7.400 0" /><circle cx="10" cy="14" r="1.300" fill="#fff" /></svg>
      <svg className="ml-[10px]" width="20" height="18" viewBox="0 0 20 18" fill="none" stroke="#fff" strokeWidth="1.400"><path d="M.8 6v6H4l4 3.800V2.200L4 6zM10.500 6.500q1.700 2.500 0 5M13 4.200q3.400 4.800 0 9.600" /><path d="M15.800 1.500q5 7.500 0 15" stroke="#666" /></svg>
      <svg className="ml-[10px]" width="21" height="13" viewBox="0 0 21 13" fill="none" stroke="#fff" strokeWidth="1.500"><rect x=".8" y=".8" width="16.500" height="11.400" rx="2" /><path d="M3 3h6.500v7H3z" fill="#fff" stroke="none" /><path d="M19.300 4.500v4" strokeWidth="2" /></svg>
      <div className="ml-[19px] flex w-[77px] flex-col items-end pb-[3px] text-[14.5px] leading-[20px]"><T w={35}>19:11</T><T w={77}>04-05-2023</T></div>
      <div className="ml-[10px] flex h-[20px] w-[20px] items-center justify-center rounded-full bg-[#4cc2ff] text-[12px] text-black">7</div>
    </div>
  );
}

export default function App() {
  return (
    <div className="flex h-[1080px] w-[1920px] flex-col overflow-hidden bg-[#e6e6e6] font-['Noto_Sans','Open_Sans',sans-serif]">
      <TitleBar />
      <div className="flex h-[115px] shrink-0 border-b border-[#d0d0d0] bg-[#f3f3f3]">
        <Clipboard /><GroupSep />
        <FontGroup /><GroupSep />
        <Paragraph /><GroupSep />
        <Styles /><GroupSep />
        <Editing /><GroupSep />
        <svg className="mt-[99px] ml-[44px]" width="18" height="10" viewBox="0 0 18 10" fill="none" stroke="#444" strokeWidth="1.600"><path d="m1 9 8-8 8 8" /></svg>
      </div>
      <Page />
      <StatusBar />
      <Taskbar />
    </div>
  );
}
